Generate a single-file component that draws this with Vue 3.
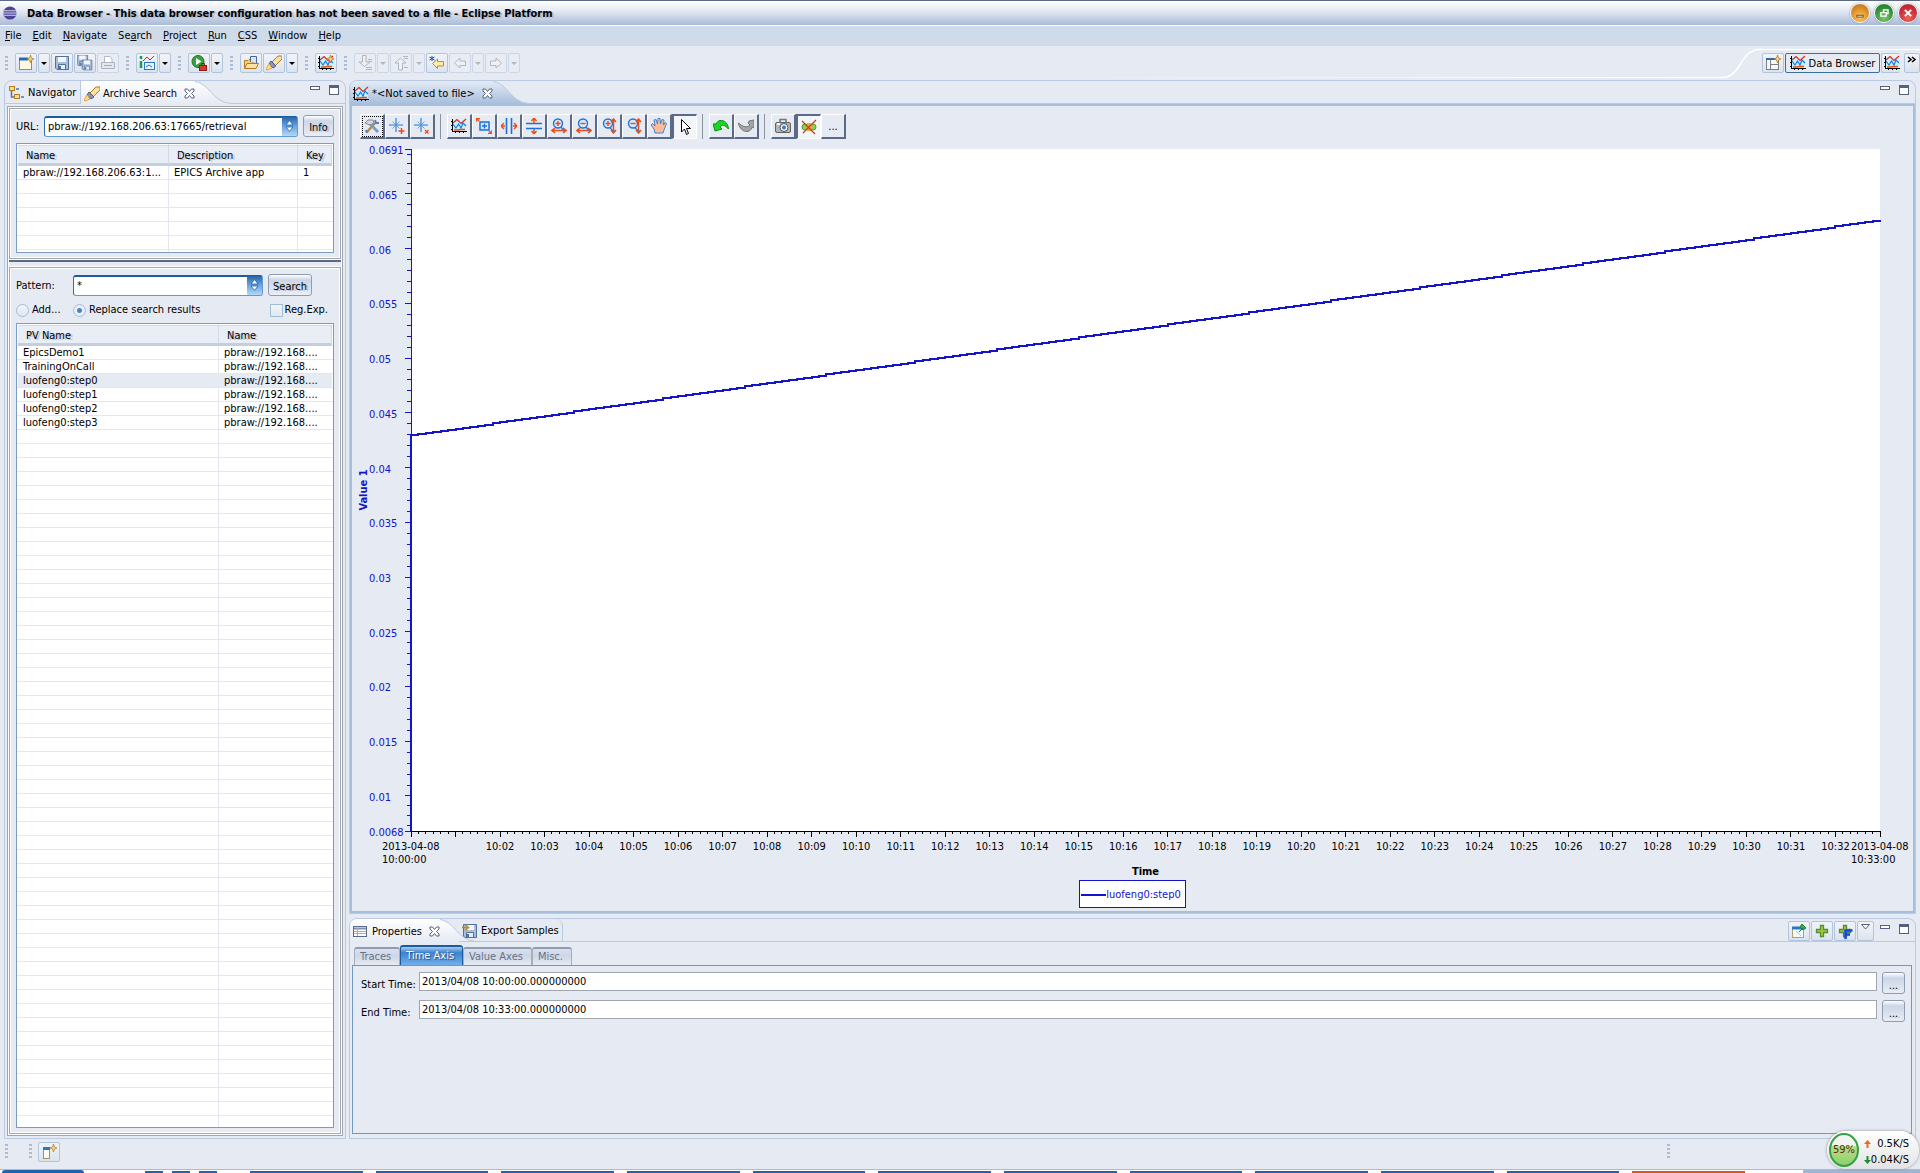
<script setup>
import { ref } from 'vue'

const menus = ['File', 'Edit', 'Navigate', 'Search', 'Project', 'Run', 'CSS', 'Window', 'Help']
const mnemonics = { Search: 2 }
const split = (m) => {
  const i = mnemonics[m] || 0
  return [m.slice(0, i), m[i], m.slice(i + 1)]
}

const chartIcon = '<rect x="2" y="2" width="13" height="10" fill="#bff4fa"/><path d="M1.500 1V14M1 13.500H16M0 3.500H1M0 7.500H1M0 11.500H1M4.500 14V15M8.500 14V15M12.500 14V15" stroke="#000" fill="none"/><path d="M2 5 6 1.500 10 5.500 15 1" stroke="#e8201c" stroke-width="1.100" fill="none"/><path d="M2 6 5 10 7.500 6 10 10 12 5 15 8" stroke="#1673e8" stroke-width="1.100" fill="none"/><path d="M3 12H7L9 11.500H14" stroke="#f04a10" stroke-width="1.500" fill="none"/>'
const sparkle = '<path d="M12.500 0 13.500 3 16 4 13.500 5 12.500 8 11.500 5 9 4 11.500 3Z" fill="#f5d98a" stroke="#a8781c" stroke-width=".7"/>'
const rocket = '<path d="M6 7 12 1H16V4L9 11Z" fill="#f8dfa2" stroke="#b07a2a"/><path d="M5 6 10 11 7 13 3 9Z" fill="#8c93b8" stroke="#4b5a8e"/><path d="M3 9 6 13 1 15 0 14Z" fill="#fbe28a" stroke="#e4a443"/>'
const floppy = '<path d="M1.500 1.500H14.500V14.500H3L1.500 13Z" fill="#a9bcd8" stroke="#51719c"/><rect x="4" y="2" width="8" height="5" fill="#f2f5fa"/><path d="M4.500 14V9.500H11.500V14" fill="#e9eef6" stroke="#51719c"/><path d="M6 11V14" stroke="#51719c" stroke-width="2"/>'
const plus = '<path d="M6.500 2.500H9.500V6.500H13.500V9.500H9.500V13.500H6.500V9.500H2.500V6.500H6.500Z" fill="#b2c83a" stroke="#4f8f3c" stroke-width="1.300"/>'
const spark8 = '<path d="M7 0V14M0 7H14" stroke="#1a78e8" stroke-width="1.100"/><path d="M3.500 3.500 10.500 10.500M10.500 3.500 3.500 10.500" stroke="#5f93c8" stroke-width=".8"/>'
const lens = (sign) => `<circle cx="7" cy="5.500" r="4.500" fill="#d9e6fa" stroke="#1a72dc" stroke-width="1.400"/><path d="M4.500 5.500H9.500${sign ? 'M7 3V8' : ''}" stroke="#f04a10" stroke-width="1.400"/>`
const hArrow = '<path d="M1 12.500H15M4 10 1 12.500 4 15M12 10 15 12.500 12 15" stroke="#f04a10" stroke-width="1.500" fill="none"/><path d="M10 9 13 13" stroke="#3d7ecb" stroke-width="1.500"/>'
const vArrow = '<path d="M12.500 1V15M10 4 12.500 1 15 4M10 12 12.500 15 15 12" stroke="#f04a10" stroke-width="1.500" fill="none"/><path d="M9 10 14 14" stroke="#3d7ecb" stroke-width="1.500"/>'

const icons = {
  chart: chartIcon,
  chartNew: chartIcon + sparkle,
  newWiz: '<rect x="1.500" y="3.500" width="12" height="11" fill="#fdf8e2" stroke="#b08a36"/><path d="M1 4H10" stroke="#2c69b4" stroke-width="3"/>' + sparkle,
  save: floppy,
  saveAll: '<g transform="translate(-1 -1) scale(.8)">' + floppy + '</g><g transform="translate(4 4) scale(.75)">' + floppy + '</g>',
  print: '<path d="M4.500 7V1.500H10L12 4V7" fill="#fff" stroke="#b3b8c4"/><path d="M1.500 7.500H14.500V13.500H1.500Z" fill="#e4e6ec" stroke="#b0b4c0"/><path d="M4 10.500H12" stroke="#a5aab8"/>',
  list: '<path d="M2 1V4M2 6V13" stroke="#18a050" stroke-width="2.500"/><path d="M4 6 8 2 11 5 15 1" stroke="#e8201c" fill="none"/><rect x="5.500" y="7.500" width="10" height="7" fill="#e8f4ff" stroke="#2e78c0"/><path d="M7 12 10 10 13 12" stroke="#1673e8" fill="none"/>',
  run: '<circle cx="7" cy="6.500" r="6" fill="#36a33c" stroke="#1c7424"/><path d="M5 3V10L10.500 6.500Z" fill="#fff"/><rect x="8.500" y="10.500" width="7" height="5" fill="#d4392e" stroke="#8e1c16"/><path d="M10.500 10V8.500H13.500V10" stroke="#8e1c16" fill="none"/>',
  folder: '<path d="M1.500 13.500V5.500H5L6 4.500H9V7.500H14" fill="#f6cf7c" stroke="#b57b1e"/><path d="M7.500 7V1.500H13.500V8" fill="#d6e6fa" stroke="#45679c"/><path d="M1.500 13.500 4 8.500H15.500L13 13.500Z" fill="#fbe3a6" stroke="#b57b1e"/>',
  rocket,
  next: '<path d="M5.500 .500H9V7H13L7.500 11.500 2 7H5.500Z" fill="#f1f1f3" stroke="#b2b3b8"/><path d="M9 12.500H15M9 14.500H15M11 4.500H15M12 6.500H15" stroke="#b2b3b8"/>',
  prev: '<path d="M5.500 15V8H2L7.500 3 13 8H9.500V15Z" fill="#f1f1f3" stroke="#b2b3b8"/><path d="M10 1.500H15M11 3.500H15M11 12.500H15" stroke="#b2b3b8"/>',
  lastEdit: '<path d="M3.500 8.500 8.500 4V6.500H14.500V11H8.500V13.500Z" fill="#fbe9a8" stroke="#c0912b"/><path d="M3 1V6M.500 2 5.500 5M5.500 2 .500 5" stroke="#24508a"/>',
  back: '<path d="M2.500 8 8 3V6H13.500V10.500H8V13Z" fill="#f0f0f2" stroke="#b5b6bb"/>',
  fwd: '<path d="M13.500 8 8 3V6H2.500V10.500H8V13Z" fill="#f0f0f2" stroke="#b5b6bb"/>',
  persp: '<rect x="1.500" y="3.500" width="12" height="11" fill="#f8f8f2" stroke="#7b7f8c"/><path d="M1 4H12" stroke="#2c69b4" stroke-width="2"/><path d="M5.500 5V14M5 9.500H13" stroke="#7b7f8c"/>' + sparkle,
  nav: '<rect x=".500" y="1.500" width="5" height="4" fill="#f9dc92" stroke="#b57b1e"/><rect x="5.500" y="9.500" width="5" height="4" fill="#f9dc92" stroke="#b57b1e"/><path d="M2.500 6V12H5M7 4H10M12 12H15" stroke="#3c78c0" stroke-width="1.500" fill="none"/>',
  tools: '<path d="M3 14 11 5" stroke="#b78a3c" stroke-width="2.500"/><path d="M14 14 6 6" stroke="#7f9cc0" stroke-width="3"/><path d="M1 5 4 2 9 2 10 5 6 7Z" fill="#d5dae2" stroke="#808794"/><path d="M11 2 12 5 15 5M2 12 3 15" stroke="#5a7fae" stroke-width="2" fill="none"/>',
  addAnn: spark8 + '<path d="M12.500 10V16M9.500 13H15.500" stroke="#f04a10" stroke-width="1.500"/>',
  delAnn: spark8 + '<path d="M11 12 14.500 15.500M14.500 12 11 15.500" stroke="#f04a10" stroke-width="1.200"/>',
  stagger: '<rect x="4" y="4" width="9" height="8" fill="#d9e6fa" stroke="#1a72dc" stroke-width="1.500"/><path d="M6 8H11M8.500 5.500V10.500" stroke="#1a72dc" stroke-width="1.300"/><path d="M0 4V.500H4M0 .500 3 3M16 12V15.500H12M16 15.500 13 13" stroke="#f04a10" stroke-width="1.400" fill="none"/>',
  hpan: '<path d="M5.500 0V16M10.500 0V16" stroke="#1a72dc" stroke-width="1.600"/><path d="M0 8H4M3 5 0 8 3 11M12 8H16M13 5 16 8 13 11" stroke="#f04a10" stroke-width="1.400" fill="none"/>',
  vpan: '<path d="M0 5.500H16M0 10.500H16" stroke="#1a72dc" stroke-width="1.600"/><path d="M8 0V5M5.500 3 8 0 10.500 3M8 11V16M5.500 13 8 16 10.500 13" stroke="#f04a10" stroke-width="1.400" fill="none"/>',
  hIn: lens(1) + hArrow, hOut: lens(0) + hArrow, vIn: lens(1) + vArrow, vOut: lens(0) + vArrow,
  hand: '<path d="M4 15 3 11 0 7 1.500 5.500 4 8 3 2 5 1.500 6.500 6 7 .500H9L9.500 6 11 1.500 13 2 12.500 7 14 4.500 15.500 5.500 13 12 12 15Z" fill="#fbbd98" stroke="#2a7be0" stroke-width=".9"/>',
  pointer: '<path d="M4.500 .500V13L7.500 10 9.500 15.500 11.500 14.500 9.500 9.500H13.500Z" fill="#fff" stroke="#000"/>',
  undo: '<path d="M0 6 2 13 9 11 7 9C9 6 12 7 15.500 11 15 5 11 2 7 2.500 5 3 4 4 3 6Z" fill="#19d91f" stroke="#0c8a1b"/>',
  redo: '<path d="M16 2 11 3 10 5 12 7C9 10 5 9 .500 5 1 10 5 14 10 13.500 13 12.500 14 10 14 9L16 10Z" fill="#a5a5a5" stroke="#747474"/>',
  camera: '<path d="M5 4V1.500H11V4" fill="none" stroke="#777" stroke-width="1.500"/><rect x=".500" y="4.500" width="15" height="10" rx="1.500" fill="#b5b5b3" stroke="#62625f"/><path d="M2 6H5" stroke="#fff" stroke-width="2"/><circle cx="9" cy="9.500" r="4" fill="#f2f2f2" stroke="#555"/><circle cx="9" cy="9.500" r="2" fill="#2f7fd0"/>',
  noScroll: '<circle cx="4" cy="8" r="3" fill="#8ed04e" stroke="#5a9a2a"/><circle cx="12" cy="8" r="3" fill="#8ed04e" stroke="#5a9a2a"/><rect x="6" y="4" width="4" height="8" fill="#f0a83a"/><path d="M1 2 14 15M15 1 2 14" stroke="#c8401a" stroke-width="1.300"/>',
  props: '<rect x=".500" y="2.500" width="13" height="10" fill="#fff" stroke="#5b6a88"/><path d="M1 4.500H13" stroke="#8090b0" stroke-width="2"/><path d="M4.500 4V12M1 7.500H13M1 9.500H13" stroke="#a3aec4"/>',
  exportS: floppy + '<path d="M0 4.500H5M3 1.500 6.500 4.500 3 7.500" stroke="#c08a1c" stroke-width="1.600" fill="none"/>',
  pin: '<rect x="1.500" y="4.500" width="11" height="10" fill="#f4fbff" stroke="#b0a070"/><path d="M1 5H12" stroke="#2c78c0" stroke-width="3"/><path d="M8 9 12 5M11 1 15 5 12 7 9 4Z" stroke="#1d7f33" fill="#33a94c"/><path d="M5 8 10 13" stroke="#7cd4f0"/>',
  plus,
  plusF: plus + '<path d="M8.500 16V7.500H15.500M8 11.500H13" stroke="#1444ee" stroke-width="2.500" fill="none"/>',
  fast: '<rect x="2.500" y="3.500" width="6" height="11" fill="#fbfbf3" stroke="#a49155"/><path d="M2 4.500H9" stroke="#2c78c0" stroke-width="3"/>' + sparkle
}

const mainGroups = [
  [['newWiz', 1], ['save'], ['saveAll'], ['print', 0, 1]],
  [['list', 1]],
  [['run', 1]],
  [['folder'], ['rocket', 1]],
  [['chartNew']],
  [['next', 1, 1], ['prev', 1, 1], ['lastEdit'], ['back', 1, 1], ['fwd', 1, 1]]
]
const plotGroups = [
  ['tools', 'addAnn', 'delAnn'],
  ['chart', 'stagger', 'hpan', 'vpan', 'hIn', 'hOut', 'vIn', 'vOut', 'hand', 'pointer'],
  ['undo', 'redo'],
  ['camera', 'noScroll', 'more']
]
const pressed = ['pointer', 'noScroll']

const url = ref('pbraw://192.168.206.63:17665/retrieval')
const pattern = ref('*')
const mode = ref('replace')
const regexp = ref(false)
const startTime = ref('2013/04/08 10:00:00.000000000')
const endTime = ref('2013/04/08 10:33:00.000000000')
const channels = ['EpicsDemo1', 'TrainingOnCall', 'luofeng0:step0', 'luofeng0:step1', 'luofeng0:step2', 'luofeng0:step3']
const propTabs = ['Traces', 'Time Axis', 'Value Axes', 'Misc.']

// Value axis
const lo = 0.0068
const hi = 0.0691
const yPct = (v) => ((hi - v) / (hi - lo)) * 100 + '%'
const yMajor = [hi, 0.065, 0.06, 0.055, 0.05, 0.045, 0.04, 0.035, 0.03, 0.025, 0.02, 0.015, 0.01, lo]
const yMinor = []
for (let v = 10; v < 65; v++) if (v % 5) yMinor.push(v / 1000)
for (let k = 1; k < 5; k++) yMinor.push(0.065 + k * 0.00091)
for (let k = 1; k < 4; k++) yMinor.push(0.01 - k * 0.00091)

// Time axis: one major tick each minute, one minor tick each ten seconds
const minutes = 33
const xPct = (m) => (m / minutes) * 100 + '%'
const xTicks = Array.from({ length: minutes * 6 + 1 }, (_, i) => ({ m: i / 6, major: i % 6 === 0 }))
const xLabels = Array.from({ length: 31 }, (_, i) => i + 2)

// Trace, as a staircase in a 1000 x 1000 box
const steps = minutes * 6
let trace = 'M0 1000V420'
for (let i = 1; i <= steps; i++) trace += `H${((i / steps) * 1000).toFixed(2)}V${(420 - (i / steps) * 316).toFixed(2)}`

const tasks = Array.from({ length: 12 }, (_, i) => i)
</script>

<template>
  <div class="app">
    <header class="title">
      <svg class="globe" viewBox="0 0 16 16"><circle cx="8" cy="8" r="7.500" fill="#4b4496" /><path d="M1 5.500H15M0 8H16M1 10.500H15" stroke="#d5d2f0" stroke-width="1.200" /><path d="M1 4A8 8 0 0 0 1 12" stroke="#e8a33c" fill="none" /></svg>
      <h1>Data Browser - This data browser configuration has not been saved to a file - Eclipse Platform</h1>
      <div class="winbtns">
        <button class="wb min" aria-label="Minimize"><svg viewBox="0 0 20 20"><rect x="6.500" y="12.500" width="7" height="2" fill="#fff" stroke="#7a3c08" /></svg></button>
        <button class="wb res" aria-label="Restore"><svg viewBox="0 0 20 20"><path d="M9.500 9V6.500H14.500V10.500H12M6.500 9.500H12.500V13.500H6.500Z" fill="none" stroke="#fff" stroke-width="1.500" /></svg></button>
        <button class="wb cls" aria-label="Close"><svg viewBox="0 0 20 20"><path d="M6.500 6.500 13.500 13.500M13.500 6.500 6.500 13.500" stroke="#fff" stroke-width="2" /></svg></button>
      </div>
    </header>

    <nav class="menu">
      <a v-for="m in menus" :key="m" href="#">{{ split(m)[0] }}<u>{{ split(m)[1] }}</u>{{ split(m)[2] }}</a>
    </nav>

    <div class="toolbar">
      <div v-for="(g, gi) in mainGroups" :key="gi" class="group">
        <i class="grip"></i>
        <template v-for="b in g" :key="b[0]">
          <button class="tb" :class="{ off: b[2] }" :aria-label="b[0]"><svg class="ic" viewBox="0 0 16 16" v-html="icons[b[0]]"></svg></button>
          <button v-if="b[1]" class="tb drop" :class="{ off: b[2] }" :aria-label="b[0] + ' menu'"><i class="caret"></i></button>
        </template>
      </div>
      <i class="fade"></i>
      <svg class="swoosh" viewBox="0 0 40 34" preserveAspectRatio="none"><path d="M0 31.500H4C20 30 20 3 38 3.500H40" fill="none" stroke="#fff" stroke-width="1.500" /></svg>
      <div class="persp">
        <button class="tb" aria-label="Open perspective"><svg class="ic" viewBox="0 0 16 16" v-html="icons.persp"></svg></button>
        <button class="tb wide"><svg class="ic" viewBox="0 0 16 16" v-html="icons.chart"></svg>Data Browser</button>
        <button class="tb cut" aria-label="Data browser"><svg class="ic" viewBox="0 0 16 16" v-html="icons.chart"></svg></button>
        <button class="tb more" aria-label="More"><svg viewBox="0 0 10 8"><path d="M1 1 4 3.500 1 6M5 1 8 3.500 5 6" fill="none" stroke="#000" stroke-width="1.500" /></svg></button>
      </div>
    </div>

    <main class="main">
      <section class="panel side">
        <div class="tabs">
          <div class="tab idle nav"><svg class="ic" viewBox="0 0 16 16" v-html="icons.nav"></svg>Navigator</div>
          <div class="tab on first">
            <svg class="ic" viewBox="0 0 16 16" v-html="icons.rocket"></svg>Archive Search
            <svg class="x" viewBox="0 0 11 11"><path d="M1 1H3.500L5.500 3.500 7.500 1H10V3L7.500 5.500 10 8V10H7.500L5.500 7.500 3.500 10H1V8L3.500 5.500 1 3Z" fill="#fff" stroke="#56617a" /></svg>
          </div>
          <svg class="tail" viewBox="0 0 42 23" preserveAspectRatio="none"><path d="M0 0H4C22 2 22 21 42 22.500V23H0Z" fill="url(#white)" /><path d="M0 0H4C22 2 22 21 42 22.500" fill="none" stroke="#b9cae2" /></svg>
          <div class="rest"><i class="mini"></i><i class="maxi"></i></div>
        </div>
        <div class="frame">
          <div class="pane">
            <div class="row">
              <label for="url" class="ul">URL:</label>
              <span class="combo"><select id="url" v-model="url"><option>pbraw://192.168.206.63:17665/retrieval</option></select><i><svg viewBox="0 0 9 12"><path d="M1 5 4.500 .500 8 5ZM1 7 4.500 11.500 8 7Z" fill="#fff" stroke="#1d5fa8" stroke-width=".8" /></svg></i></span>
              <button class="push">Info</button>
            </div>
            <div class="list servers">
              <table>
                <colgroup><col class="c1" /><col class="c2" /><col /></colgroup>
                <thead><tr><th>Name</th><th>Description</th><th>Key</th></tr></thead>
                <tbody><tr><td>pbraw://192.168.206.63:1...</td><td>EPICS Archive app</td><td>1</td></tr></tbody>
              </table>
            </div>
          </div>
          <div class="sash"></div>
          <div class="pane grow">
            <div class="row">
              <label for="pattern" class="pl">Pattern:</label>
              <span class="combo"><select id="pattern" v-model="pattern"><option>*</option></select><i><svg viewBox="0 0 9 12"><path d="M1 5 4.500 .500 8 5ZM1 7 4.500 11.500 8 7Z" fill="#fff" stroke="#1d5fa8" stroke-width=".8" /></svg></i></span>
              <button class="push search">Search</button>
            </div>
            <div class="row opts">
              <label class="add"><input v-model="mode" type="radio" value="add" name="mode" />Add...</label>
              <label><input v-model="mode" type="radio" value="replace" name="mode" />Replace search results</label>
              <label class="reg"><input v-model="regexp" type="checkbox" />Reg.Exp.</label>
            </div>
            <div class="list pvs">
              <table>
                <colgroup><col class="p1" /><col /></colgroup>
                <thead><tr><th>PV Name</th><th>Name</th></tr></thead>
                <tbody><tr v-for="c in channels" :key="c" :class="{ sel: c === 'luofeng0:step0' }"><td>{{ c }}</td><td>pbraw://192.168....</td></tr></tbody>
              </table>
            </div>
          </div>
        </div>
      </section>

      <div class="right">
        <section class="panel editor">
          <div class="tabs">
            <div class="tab on blue">
              <svg class="ic" viewBox="0 0 16 16" v-html="icons.chart"></svg>*&lt;Not saved to file&gt;
              <svg class="x" viewBox="0 0 11 11"><path d="M1 1H3.500L5.500 3.500 7.500 1H10V3L7.500 5.500 10 8V10H7.500L5.500 7.500 3.500 10H1V8L3.500 5.500 1 3Z" fill="#fff" stroke="#56617a" /></svg>
            </div>
            <svg class="tail" viewBox="0 0 42 23" preserveAspectRatio="none">
              <defs>
                <linearGradient id="blue" x2="0" y2="1"><stop offset="0" stop-color="#e4ebf5" /><stop offset="1" stop-color="#a6bfdd" /></linearGradient>
                <linearGradient id="white" x2="0" y2="1"><stop offset="0" stop-color="#fff" /><stop offset="1" stop-color="#e6eaf3" /></linearGradient>
              </defs>
              <path d="M0 0H4C22 2 22 21 42 22.500V23H0Z" fill="url(#blue)" /><path d="M0 0H4C22 2 22 21 42 22.500" fill="none" stroke="#b9cae2" />
            </svg>
            <div class="rest"><i class="mini"></i><i class="maxi"></i></div>
          </div>
          <div class="edbody">
            <div class="plotbar">
              <div v-for="(g, gi) in plotGroups" :key="gi" class="pgroup">
                <button v-for="b in g" :key="b" class="pb" :class="{ down: pressed.includes(b), focus: b === 'tools' }" :aria-label="b">
                  <span v-if="b === 'more'">...</span>
                  <svg v-else class="ic" viewBox="0 0 16 16" v-html="icons[b]"></svg>
                </button>
              </div>
            </div>
            <div class="chart">
              <svg class="plot">
                <rect width="100%" height="100%" fill="#fff" />
                <g class="ya">
                  <line x1="0" x2="0" y1="0" y2="100%" />
                  <line v-for="v in yMinor" :key="'n' + v" x1="-4" x2="0" :y1="yPct(v)" :y2="yPct(v)" />
                  <line v-for="v in yMajor" :key="'m' + v" x1="-6" x2="0" :y1="yPct(v)" :y2="yPct(v)" />
                  <text v-for="v in yMajor" :key="v" x="-42" dy="5" :y="yPct(v)">{{ v }}</text>
                </g>
                <svg class="ov" y="50%"><text class="bold bluetext" transform="translate(-44 0) rotate(-90)" text-anchor="middle">Value 1</text></svg>
                <svg class="ov" y="100%">
                  <g class="xa">
                    <line x1="0" x2="100%" y1="0" y2="0" />
                    <line v-for="t in xTicks" :key="t.m" :x1="xPct(t.m)" :x2="xPct(t.m)" y1="0" :y2="t.major ? 6 : 3" />
                  </g>
                  <text v-for="m in xLabels" :key="m" :x="xPct(m)" y="19" text-anchor="middle">10:{{ String(m).padStart(2, '0') }}</text>
                  <text x="-29" y="19">2013-04-08</text>
                  <text x="-29" y="32">10:00:00</text>
                  <svg class="ov" x="100%"><text x="-29" y="19">2013-04-08</text><text x="-29" y="32">10:33:00</text></svg>
                </svg>
                <svg width="100%" height="100%" viewBox="0 0 1000 1000" preserveAspectRatio="none" class="ov"><path :d="trace" class="trace" /></svg>
              </svg>
            </div>
            <div class="axisname">Time</div>
            <div class="legend"><i></i>luofeng0:step0</div>
          </div>
        </section>

        <section class="panel props">
          <div class="tabs">
            <div class="tab on white">
              <svg class="ic" viewBox="0 0 16 16" v-html="icons.props"></svg>Properties
              <svg class="x" viewBox="0 0 11 11"><path d="M1 1H3.500L5.500 3.500 7.500 1H10V3L7.500 5.500 10 8V10H7.500L5.500 7.500 3.500 10H1V8L3.500 5.500 1 3Z" fill="#fff" stroke="#56617a" /></svg>
            </div>
            <svg class="tail" viewBox="0 0 42 23" preserveAspectRatio="none"><path d="M0 0H4C22 2 22 21 42 22.500V23H0Z" fill="url(#white)" /><path d="M0 0H4C22 2 22 21 42 22.500" fill="none" stroke="#b9cae2" /></svg>
            <div class="tab idle export"><svg class="ic" viewBox="0 0 16 16" v-html="icons.exportS"></svg>Export Samples</div>
            <div class="rest">
              <button class="tb" aria-label="Pin"><svg class="ic" viewBox="0 0 16 16" v-html="icons.pin"></svg></button>
              <button class="tb" aria-label="Add PV"><svg class="ic" viewBox="0 0 16 16" v-html="icons.plus"></svg></button>
              <button class="tb" aria-label="Add formula"><svg class="ic" viewBox="0 0 16 16" v-html="icons.plusF"></svg></button>
              <button class="tb vm" aria-label="View menu"><svg viewBox="0 0 9 6"><path d="M.500 .500H8.500L4.500 5Z" fill="#fff" stroke="#56617a" /></svg></button>
              <i class="mini"></i><i class="maxi"></i>
            </div>
          </div>
          <div class="pbody">
            <div class="subtabs"><button v-for="t in propTabs" :key="t" :class="{ cur: t === 'Time Axis' }">{{ t }}</button></div>
            <form class="times" @submit.prevent>
              <div class="trow"><label for="st">Start Time:</label><input id="st" v-model="startTime" type="text" /><button class="push dots">...</button></div>
              <div class="trow"><label for="et">End Time:</label><input id="et" v-model="endTime" type="text" /><button class="push dots">...</button></div>
            </form>
          </div>
        </section>
      </div>
    </main>

    <footer class="status">
      <i class="grip"></i><i class="grip second"></i>
      <button class="tb" aria-label="Fast view"><svg class="ic" viewBox="0 0 16 16" v-html="icons.fast"></svg></button>
      <i class="grip far"></i>
    </footer>
    <div class="taskbar">
      <i class="start"></i><i class="q"></i><i class="q"></i><i class="q"></i>
      <div class="tasks"><i v-for="t in tasks" :key="t" :class="{ hot: t === 11 }"></i></div>
      <i class="tray"></i>
    </div>

    <div class="gauge">
      <span class="ball">59%</span>
      <div class="rates">
        <span><svg viewBox="0 0 7 8"><path d="M3.500 0 7 4H4.500V8H2.500V4H0Z" fill="#f26a12" /></svg>0.5K/S</span>
        <span><svg viewBox="0 0 7 8"><path d="M3.500 8 7 4H4.500V0H2.500V4H0Z" fill="#1d8c2c" /></svg>0.04K/S</span>
      </div>
    </div>
  </div>
</template>

<style>
body { margin: 0; background: #e6eaf3; }
</style>

<style scoped>
.app, .app button, .app input, .app select { font-family: Tahoma, "DejaVu Sans Condensed", "Liberation Sans", sans-serif; font-size: 11px; color: #000; }
.app { position: relative; display: flex; flex-direction: column; min-height: 100vh; background: #e6eaf3; line-height: 14px; white-space: nowrap; }
.app * { box-sizing: border-box; }
button { margin: 0; padding: 0; border: 0; background: none; }
.ic { width: 16px; height: 16px; flex: none; }

.title { display: flex; align-items: center; height: 26px; padding: 0 2px 0 3px; border-top: 1px solid #5b6a88; border-bottom: 1px solid #fff; background: linear-gradient(#fff, #e4eaf3 40%, #a9bbd8); }
.globe { width: 14px; height: 14px; }
h1 { flex: 1; margin: 0 0 0 10px; padding-top: 2px; font-size: 11px; font-weight: bold; text-shadow: 2px 1px 0 #b3bfd3; }
.winbtns { display: flex; gap: 4px; }
.wb { width: 20px; height: 20px; border-radius: 50%; border: 1px solid #f4f6fa; box-shadow: 0 0 2px #7b859c; }
.wb svg { display: block; width: 18px; height: 18px; }
.min { background: radial-gradient(circle at 50% 75%, #f7c862, #d98a24 60%, #b3702c); }
.res { background: radial-gradient(circle at 50% 75%, #7fc86a, #2f8f36 60%, #2b7038); }
.cls { background: radial-gradient(circle at 50% 75%, #f0635a, #c92a34 60%, #a0303c); }

.menu { display: flex; gap: 11px; align-items: center; height: 20px; padding-left: 5px; background: #d0dbea; }
.menu a { color: #000; text-decoration: none; }

.toolbar { display: flex; align-items: stretch; height: 34px; padding-left: 5px; }
.group { display: flex; gap: 1px; align-items: center; padding: 0 7px 0 0; height: 34px; }
.grip { width: 3px; height: 15px; margin-right: 6px; background: repeating-linear-gradient(#a9bdd6 0 2px, transparent 2px 4px); }
.tb { display: flex; align-items: center; justify-content: center; width: 22px; height: 20px; border: 1px solid #b0c4dc; border-radius: 2px; background: linear-gradient(#f0f3f9, #e8ecf4 50%, #dbe3ee); }
.tb.off { border-color: #ccd6e4; background: #e8ecf4; }
.tb.drop { width: 12px; }
.caret { border: 3px solid transparent; border-top-color: #000; border-bottom: 0; }
.off .caret { border-top-color: #b5b6bb; }
.fade { flex: 1; margin-left: 500px; background: linear-gradient(90deg, transparent, #fff) 0 31px / 100% 1px no-repeat; }
.swoosh { width: 42px; height: 34px; }
.persp { display: flex; gap: 1px; align-items: center; height: 34px; background: linear-gradient(#fff, #fff) 0 3px / 100% 1px no-repeat; }
.tb.wide { width: 95px; gap: 3px; border-color: #3a6ea5; background: #e6eaf3; }
.tb.cut { width: 19px; overflow: hidden; justify-content: flex-start; padding-left: 2px; border-right: 0; }
.tb.more { width: 16px; margin-left: 3px; align-items: flex-start; padding-top: 2px; }
.more svg { width: 10px; height: 8px; }

.main { flex: 1; display: flex; gap: 3px; padding: 0 4px; }
.panel { display: flex; flex-direction: column; border: 1px solid #b9cae2; border-radius: 8px 8px 0 0; }
.side { width: 342px; flex: none; }
.right { flex: 1; min-width: 0; display: flex; flex-direction: column; gap: 4px; }
.editor { flex: 1; }
.props { min-height: 221px; }

.tabs { display: flex; height: 23px; }
.tab { position: relative; z-index: 1; display: flex; align-items: center; gap: 3px; padding: 2px 0 0 3px; border-radius: 7px 0 0 0; }
.idle { border-bottom: 1px solid #b9cae2; }
.nav { width: 75px; padding-left: 4px; }
.first { border-left: 1px solid #b9cae2; border-radius: 0; }
.on { background: linear-gradient(#fff, #e6eaf3); }
.blue { background: linear-gradient(#e4ebf5, #a6bfdd); }
.x { width: 11px; height: 11px; margin-left: 4px; }
.tail { width: 42px; height: 23px; margin-left: -6px; flex: none; }
.export { margin-left: -17px; padding-right: 3px; border-right: 1px solid #b9cae2; border-radius: 0 7px 0 0; }
.rest { flex: 1; display: flex; justify-content: flex-end; align-items: flex-start; gap: 1px; padding: 4px 6px 0 0; border-bottom: 1px solid #b9cae2; }
.mini { width: 10px; height: 4px; border: 1px solid #56617a; background: #fff; margin: 1px 8px 0 0; }
.maxi { width: 10px; height: 10px; border: 1px solid #56617a; border-top-width: 3px; background: #fff; }
.props .rest { padding-top: 2px; }
.props .mini { margin: 4px 8px 0 5px; }
.props .maxi { margin-top: 3px; }
.tb.vm { width: 17px; align-items: flex-start; padding-top: 2px; }
.vm svg { width: 9px; height: 6px; }

.frame { flex: 1; display: flex; flex-direction: column; margin: 2px; padding: 1px; border: 1px solid #a0a6ae; background: #fff; }
.pane { display: flex; flex-direction: column; border: 1px solid #a0a6ae; box-shadow: inset 0 0 0 1px #fff; padding: 6px 6px 5px; background: #e6eaf3; }
.grow { flex: 1; }
.sash { height: 6px; margin: 1px 0; border-top: 2px solid #5b6a88; background: #e6eaf3; }
.row { display: flex; align-items: center; }
.ul { width: 28px; padding-top: 2px; }
.pl { width: 57px; padding-top: 2px; }
.combo { position: relative; flex: 1; height: 21px; }
select { width: 100%; height: 21px; padding: 0 18px 1px 3px; border: 1px solid #5e9ad6; border-top: 2px solid #1b5c9f; border-left-color: #2d6db0; border-radius: 3px; background: #fff; appearance: none; }
.combo i { position: absolute; top: 1px; right: 1px; width: 15px; height: 19px; display: flex; align-items: center; justify-content: center; border-radius: 0 2px 2px 0; background: linear-gradient(#2565ab, #6fa5df 50%, #b3d8f8); pointer-events: none; }
.combo svg { width: 9px; height: 12px; }
.push { height: 22px; width: 31px; margin-left: 5px; padding-top: 2px; border: 1px solid #8f9cb2; border-radius: 3px; background: linear-gradient(#fff, #ccd6e6 25%, #e9edf5); text-shadow: 2px 1px 0 #b3bfd3; }
.search { width: 44px; margin-right: 22px; }
.opts { height: 14px; margin-top: 7px; }
.opts label { display: flex; align-items: center; gap: 3px; }
.opts .add { width: 57px; flex: none; }
.opts .reg { margin-left: auto; margin-right: 6px; gap: 2px; }
input[type=radio], input[type=checkbox] { flex: none; appearance: none; width: 13px; height: 13px; margin: 0; border: 1px solid #a4bdd6; border-radius: 50%; background: linear-gradient(#f2f6fb, #dfe7f1); }
input[type=checkbox] { border-radius: 0; }
input[type=radio]:checked { background: radial-gradient(circle, #4a86c4 0 2px, #e8eff8 3px); }

.list { margin-top: 6px; border: 1px solid #7b9cbf; padding: 1px; background-color: #fff; }
.servers { height: 110px; background-image: linear-gradient(#e2e7f1, #e2e7f1), linear-gradient(#e2e7f1, #e2e7f1), repeating-linear-gradient(#fff 0 13px, #e2e7f1 13px 14px); background-size: 1px 100%, 1px 100%, 100% 84px; background-position: 151px 0, 280px 0, 0 22px; background-repeat: no-repeat; }
.pvs { flex: 1; background-image: linear-gradient(#e2e7f1, #e2e7f1), repeating-linear-gradient(#e2e7f1 0 1px, #fff 1px 14px); background-size: 1px 100%, 100% 100%; background-position: 201px 0, 0 21px; background-repeat: no-repeat; }
table { width: 100%; table-layout: fixed; border-collapse: separate; border-spacing: 0; }
.c1 { width: 151px; }
.c2 { width: 129px; }
.p1 { width: 201px; }
th { height: 21px; padding: 2px 8px 0; line-height: 13px; text-align: left; font-weight: normal; border-right: 1px solid #d3dae6; border-bottom: 3px solid #c3cede; border-top: 1px solid #d3dae6; background: #e9edf5; text-shadow: 2px 1px 0 #b9c5d8; }
td { height: 14px; line-height: 13px; padding: 0 5px; border-bottom: 1px solid #e2e7f1; overflow: hidden; }
.sel td { background: #e6eaf3; }

.edbody { flex: 1; display: flex; flex-direction: column; padding: 8px 0 3px; border: 2px solid #a6bfdd; }
.plotbar { display: flex; height: 25px; margin: 0 0 10px 8px; }
.pgroup { display: flex; }
.pgroup + .pgroup { margin-left: 5px; padding-left: 6px; border-left: 1px solid #8b919d; }
.pb { display: flex; align-items: center; justify-content: center; width: 25px; height: 25px; border: 1px solid #fff; border-right: 2px solid #5b6a88; border-bottom: 2px solid #5b6a88; background: #e6eaf3; }
.pb.down { border: 1px solid #fff; border-left: 2px solid #5b6a88; border-top: 2px solid #5b6a88; background: #f3f5f9; }
.pb.focus { outline: 1px dotted #000; outline-offset: -3px; }
.chart { flex: 1; display: flex; min-height: 300px; margin: 0 33px 0 59px; }
.plot { flex: 1; width: 100%; overflow: visible; }
.ov { overflow: visible; }
.ya line { stroke: #1414c8; shape-rendering: crispEdges; }
.ya text, .bluetext { fill: #1414c8; }
.xa line { stroke: #000; shape-rendering: crispEdges; }
.bold { font-weight: bold; }
.trace { fill: none; stroke: #1414c8; stroke-width: 2px; vector-effect: non-scaling-stroke; shape-rendering: crispEdges; }
.axisname { margin: 34px 33px 0 59px; text-align: center; font-weight: bold; line-height: 14px; }
.legend { align-self: center; display: flex; align-items: center; height: 28px; margin-top: 1px; padding: 2px 4px 0 1px; border: 1px solid #1414c8; background: #fff; color: #1414c8; }
.legend i { width: 25px; height: 2px; background: #1414c8; }

.pbody { flex: 1; display: flex; flex-direction: column; padding: 3px 3px 4px 2px; }
.subtabs { display: flex; align-items: flex-end; height: 20px; padding-left: 2px; }
.subtabs button { height: 18px; padding: 0 8px 0 5px; border: 1px solid #a3aebf; border-top: 2px solid #8f9cb2; border-bottom: 0; border-radius: 3px 3px 0 0; background: linear-gradient(#dbe2ed, #cdd6e4 40%, #e6eaf3); color: #66718a; line-height: 16px; }
.subtabs .cur { height: 21px; border-color: #1b5c9f; background: linear-gradient(#a9cdf0, #3d82cf 30%, #77b2ec); color: #fff; text-shadow: 1px 1px 1px #1b4c80; margin-bottom: -1px; padding-bottom: 2px; }
.times { flex: 1; padding: 6px 6px; border: 1px solid #7099c0; }
.trow { display: flex; align-items: center; height: 22px; margin-bottom: 6px; }
.trow label { width: 60px; padding: 3px 0 0 2px; }
.trow input { flex: 1; height: 19px; align-self: flex-start; padding: 0 2px; border: 1px solid #a0a6ae; background: #fff; }
.dots { width: 23px; padding-top: 4px; }

.status { display: flex; align-items: center; height: 30px; padding: 0 0 5px 5px; }
.second { margin-left: 15px; }
.far { margin-left: auto; margin-right: 250px; }
.taskbar { display: flex; height: 4px; padding-left: 2px; border-top: 1px solid #a9bbd8; background: #fff; }
.start { width: 82px; margin-right: 61px; border-radius: 6px 6px 0 0; background: #2263b0; }
.q { width: 18px; margin-right: 9px; border-top: 1px solid #fff; background: #2263b0; }
.tasks { flex: 1; display: flex; gap: 13px; margin: 1px 58px 0 24px; }
.tasks i { flex: 1; background: #2263b0; }
.tasks .hot { background: #d4571c; }
.tray { width: 117px; background: #9db6d8; }

.gauge { position: absolute; right: 1px; bottom: 4px; display: flex; gap: 5px; width: 92px; height: 38px; padding: 2px; border-radius: 19px; background: linear-gradient(#fff, #e2e3e5); box-shadow: 0 0 3px #888; }
.ball { width: 34px; height: 34px; border: 2px solid #35a045; border-radius: 50%; line-height: 30px; text-align: center; color: #5c2a10; background: linear-gradient(#f2f4f2 35%, #b5e08a 35%, #8fd06a); }
.rates { flex: 1; display: flex; flex-direction: column; gap: 2px; padding: 4px 8px 0 0; }
.rates span { display: flex; justify-content: space-between; align-items: center; }
.rates svg { width: 7px; height: 8px; }
</style>
